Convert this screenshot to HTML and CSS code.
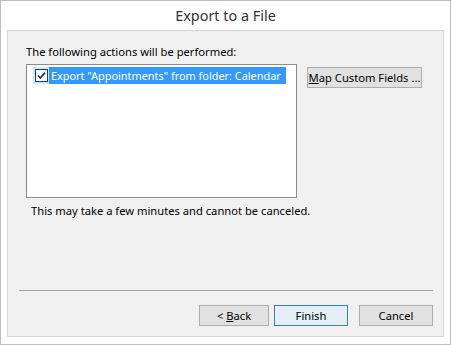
FILE: index.html
```html
<!DOCTYPE html>
<html>
<head>
<meta charset="utf-8">
<link rel="stylesheet" href="styles.css">
</head>
<body>
<div class="window">
  <div class="title">Export to a File</div>
  <div class="panel">
    <div class="label">The following actions will be performed:</div>
    <div class="row">
      <div class="listbox">
        <div class="item">
          <span class="check-cell">
            <svg class="check" width="13" height="13" viewBox="0 0 13 13">
              <rect x="0.5" y="0.5" width="12" height="12" fill="#fff" stroke="#1c3f66"/>
              <path d="M3 6.5 L5.3 9 L10 3.6" fill="none" stroke="#1c2f4a" stroke-width="1.6"/>
            </svg>
          </span>
          <span class="item-text">Export "Appointments" from folder: Calendar</span>
        </div>
      </div>
      <button class="btn map"><u>M</u>ap Custom Fields ...</button>
    </div>
    <div class="note">This may take a few minutes and cannot be canceled.</div>
    <div class="footer">
      <div class="sep"></div>
      <div class="buttons">
        <button class="btn back">&lt; <u>B</u>ack</button>
        <button class="btn default">Finish</button>
        <button class="btn cancel">Cancel</button>
      </div>
    </div>
  </div>
</div>
</body>
</html>
```

FILE: styles.css
```css
html, body {
  margin: 0;
  padding: 0;
  background: #ffffff;
}
body {
  font-family: "Noto Sans", "Open Sans", sans-serif;
  font-size: 11.2px;
  color: #000;
}
.window {
  width: 451px;
  height: 345px;
  box-sizing: border-box;
  border: 1px solid #bdbdbd;
  background: #ffffff;
  display: flex;
  flex-direction: column;
}
.title {
  height: 29px;
  line-height: 30px;
  text-align: center;
  font-size: 14.4px;
  color: #333;
}
.panel {
  margin: 0 6px 0 6px;
  height: 307px;
  box-sizing: border-box;
  border: 1px solid #d6d6d6;
  background: #f0f0f0;
  padding: 13px 0 0 18px;
  display: flex;
  flex-direction: column;
}
.label {
  line-height: 16px;
  height: 16px;
}
.row {
  display: flex;
  align-items: flex-start;
  margin-top: 4px;
}
.listbox {
  width: 271px;
  height: 134px;
  box-sizing: border-box;
  border: 1px solid #8c8c8c;
  background: #fff;
  padding: 2px 0 0 6px;
}
.item {
  display: inline-flex;
  height: 17px;
}
.check-cell {
  flex: none;
  width: 16px;
  background: #cde6fb;
  display: flex;
  align-items: center;
  justify-content: center;
}
.check {
  display: block;
}
.item-text {
  background: #3399ff;
  color: #fff;
  line-height: 17px;
  padding: 0 5px 0 2px;
  white-space: nowrap;
  font-size: 10.9px;
}
.btn {
  font-family: "Noto Sans", "Open Sans", sans-serif;
  font-size: 11.2px;
  color: #000;
  background: #e1e1e1;
  border: 1px solid #adadad;
  height: 21px;
  width: 74px;
  padding: 0;
  margin: 0;
  line-height: 19px;
  white-space: nowrap;
}
.map {
  width: 115px;
  margin-left: 10px;
  margin-top: 3px;
}
.note {
  margin-top: 5px;
  padding-left: 5px;
  line-height: 16px;
}
.footer {
  margin-top: auto;
  padding-bottom: 10px;
}
.sep {
  margin-left: -7px;
  width: 414px;
  height: 1px;
  background: #a0a0a0;
}
.buttons {
  display: flex;
  justify-content: flex-end;
  margin-top: 14px;
  margin-right: 10px;
  gap: 5px;
}
.btn.back {
  width: 70px;
}
.btn.default {
  border-color: #3c7fb1;
  background: #e5eef6;
}
.btn.cancel {
  margin-left: 6px;
}
```
